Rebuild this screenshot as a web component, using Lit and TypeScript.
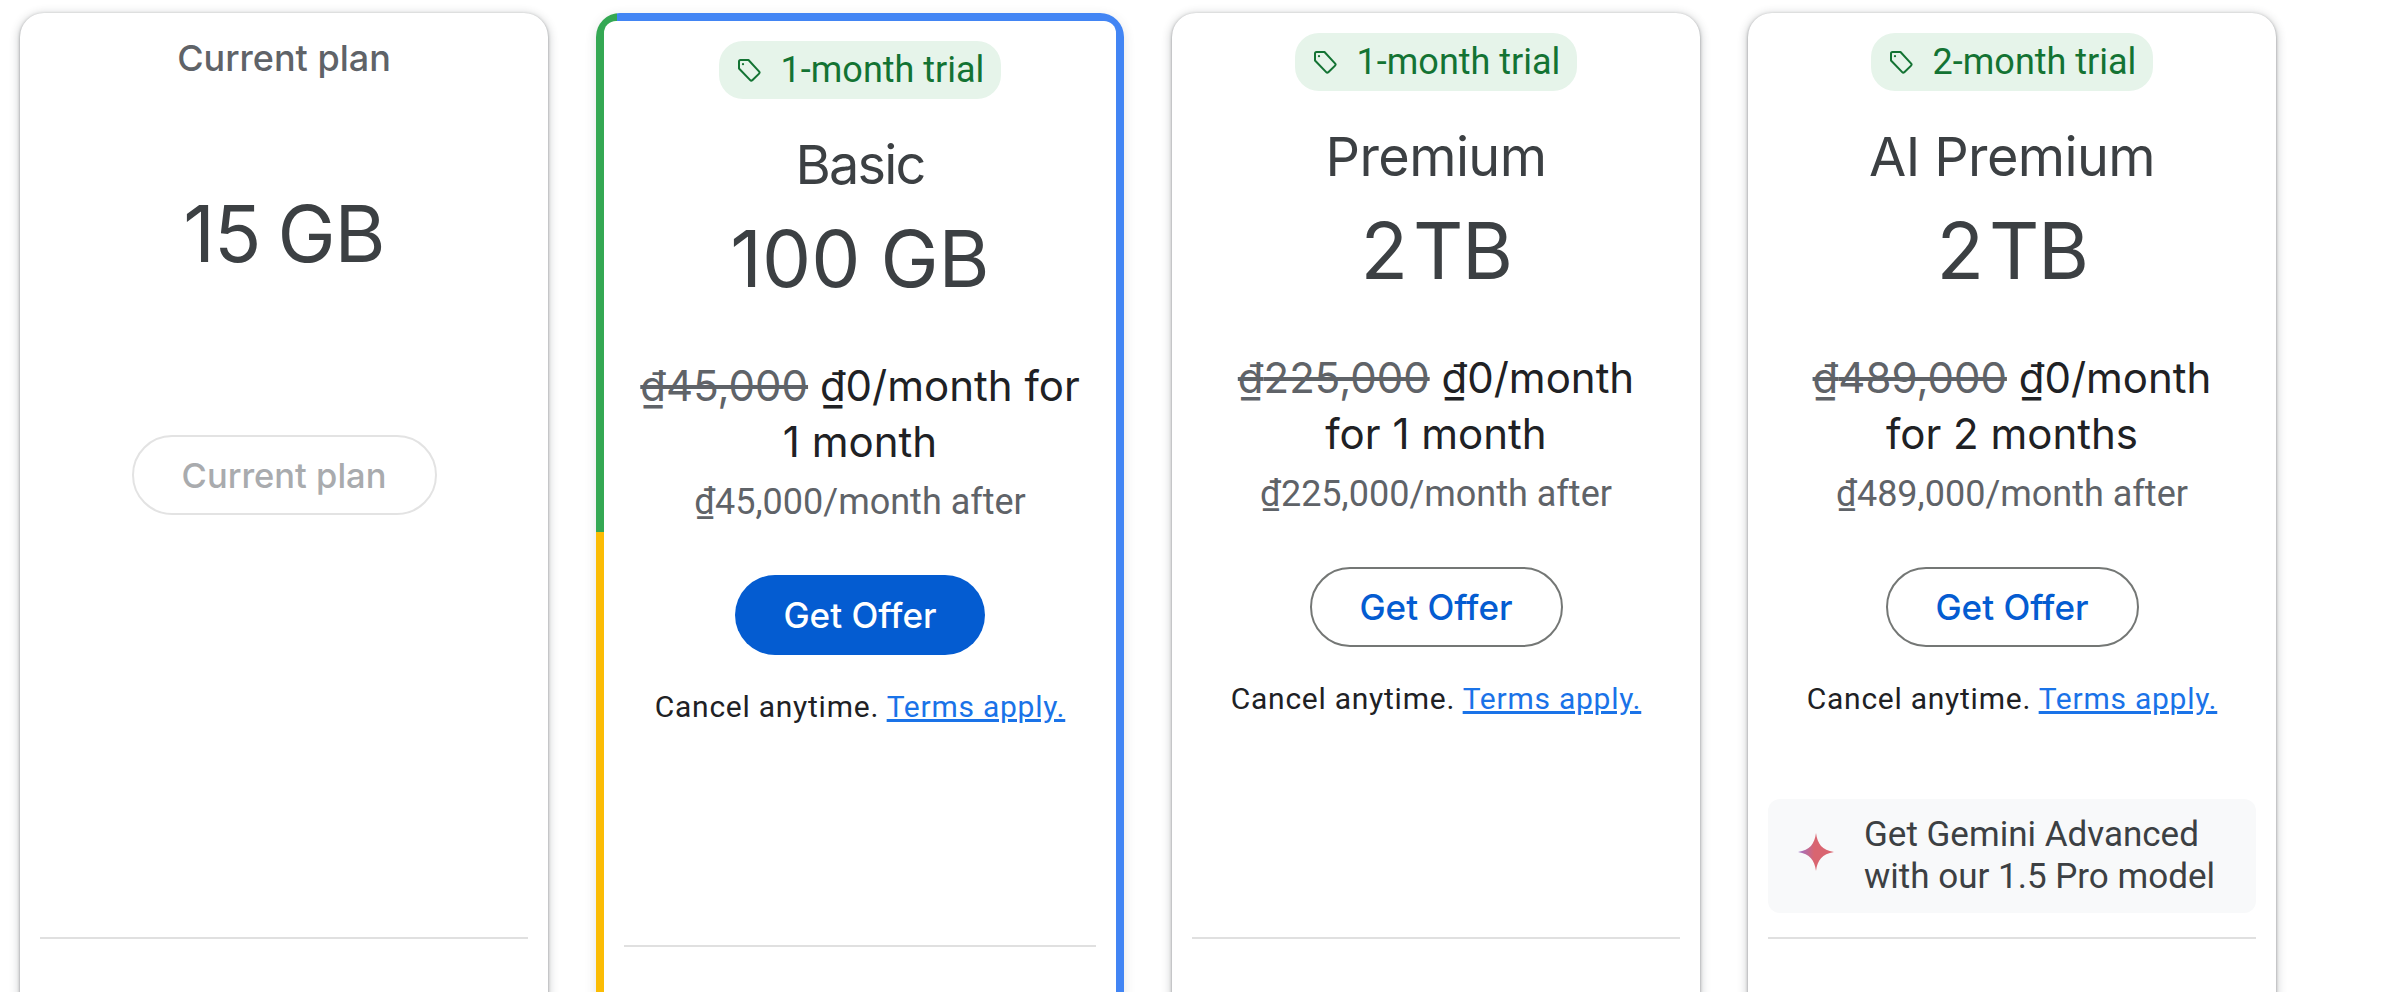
import { LitElement, html, css, nothing } from "lit";
import { customElement } from "lit/decorators.js";

const tag = html`<svg class="tag" viewBox="0 0 24 24" fill="none" stroke="currentColor" stroke-width="2" stroke-linejoin="round"><path d="M2 3.5A1.5 1.5 0 0 1 3.5 2H11.5L22.2 13.6A1.5 1.5 0 0 1 22.1 15.6L15.3 22.2A1.5 1.5 0 0 1 13.2 22.1L2 10.5Z"/><circle cx="6" cy="6.2" r="1.1" fill="currentColor" stroke="none"/></svg>`;

const plans = [
  { name: "Premium", trial: "1-month trial", size: "2 TB", was: "225,000", l1: "/month", l2: "for 1 month", after: "225,000" },
  { name: "AI Premium", trial: "2-month trial", size: "2 TB", was: "489,000", l1: "/month", l2: "for 2 months", after: "489,000", gem: true },
];

@customElement("app-root")
export class AppRoot extends LitElement {
  static styles = css`
    :host { display: block; width: 2390px; height: 992px; overflow: hidden; background: #fff; font-family: Roboto, sans-serif; }
    .row { display: flex; gap: 48px; padding: 13px 0 0 20px; align-items: flex-start; }
    .card { width: 528px; height: 1100px; box-sizing: border-box; border-radius: 24px; background: #fff; padding: 20px; flex: none;
      box-shadow: 0 1.5px 3px rgba(60,64,67,.5), 0 2px 9px 2px rgba(60,64,67,.22); }
    .ring { width: 528px; height: 1100px; box-sizing: border-box; padding: 8px; border-radius: 24px; flex: none;
      background:
        linear-gradient(#4285f4,#4285f4) right top / 507px 100% no-repeat,
        linear-gradient(#34a853,#34a853) left top / 21px 519px no-repeat,
        linear-gradient(#fbbc04,#fbbc04) left bottom / 21px calc(100% - 519px) no-repeat;
      box-shadow: 0 3px 12px rgba(60,64,67,.14); }
    .inner { height: 100%; box-sizing: border-box; background: #fff; border-radius: 12px; padding: 20px 20px 0; }
    .top { height: 904px; display: flex; flex-direction: column; align-items: center; text-align: center; }
    .rule { height: 2px; background: #e0e0e0; }
    .label { font: 500 36px/50px Inter, sans-serif; color: #5f6368; }
    .pill { display: flex; align-items: center; gap: 20px; height: 58px; box-sizing: border-box; padding: 0 17px 0 18px; border-radius: 24px; background: #e6f4ea; color: #137333; font-size: 36px; }
    .tag { width: 24px; height: 24px; }
    .name { font: 400 54px/72px Inter, sans-serif; letter-spacing: -.6px; color: #3c4043; margin-top: 30px; }
    .name.basic { letter-spacing: -1.8px; }
    .size { font: 400 78px/96px Inter, sans-serif; color: #3c4043; margin-top: 10px; letter-spacing: -1px; word-spacing: -4px; }
    .size.hundred { letter-spacing: 0; word-spacing: -2px; }
    .size.tb { letter-spacing: -1.5px; word-spacing: -14px; }
    .size.solo { margin-top: 103px; }
    .price { font: 400 42px/56px Inter, sans-serif; color: #202124; margin-top: 51px; }
    .price s { color: #5f6368; }
    .cur { text-decoration: underline; }
    .after { font-size: 36px; line-height: 50px; color: #5f6368; margin-top: 7px; }
    .btn { display: flex; align-items: center; justify-content: center; box-sizing: border-box; height: 80px; width: 250px; border-radius: 40px; font: 500 35px Inter, sans-serif; margin-top: 48px; }
    .fill { background: #045cd1; color: #fff; }
    .line { border: 2px solid #747775; color: #045cd1; width: 253px; }
    .off { border: 2px solid #e3e3e3; color: #a9abae; width: 305px; margin-top: 153px; font-size: 34.5px; }
    .cancel { font-size: 30px; line-height: 44px; color: #202124; margin-top: 30px; letter-spacing: .75px; }
    .cancel a { color: #1a73e8; text-decoration: underline; }
    .gem { align-self: stretch; margin-top: auto; height: 114px; box-sizing: border-box; border-radius: 12px; background: #f8f9fa; display: flex; align-items: center; gap: 30px; padding-left: 30px; text-align: left; font-size: 35px; line-height: 42px; color: #3c4043; margin-bottom: 24px; }
    .star { width: 36px; height: 38px; flex: none; margin-bottom: 8px; }
  `;

  render() {
    return html`<div class="row">
      <div class="card">
        <div class="top">
          <div class="label">Current plan</div>
          <div class="size solo">15 GB</div>
          <div class="btn off">Current plan</div>
        </div>
        <div class="rule"></div>
      </div>
      <div class="ring"><div class="inner">
        <div class="top">
          <div class="pill">${tag}<span>1-month trial</span></div>
          <div class="name basic">Basic</div>
          <div class="size hundred">100 GB</div>
          <div class="price"><s><span class="cur">₫</span>45,000</s> <span class="cur">₫</span>0/month for<br />1 month</div>
          <div class="after"><span class="cur">₫</span>45,000/month after</div>
          <div class="btn fill">Get Offer</div>
          <div class="cancel">Cancel anytime. <a>Terms apply.</a></div>
        </div>
        <div class="rule"></div>
      </div></div>
      ${plans.map((p) => html`<div class="card">
        <div class="top">
          <div class="pill">${tag}<span>${p.trial}</span></div>
          <div class="name">${p.name}</div>
          <div class="size tb">${p.size}</div>
          <div class="price"><s><span class="cur">₫</span>${p.was}</s> <span class="cur">₫</span>0${p.l1}<br />${p.l2}</div>
          <div class="after"><span class="cur">₫</span>${p.after}/month after</div>
          <div class="btn line">Get Offer</div>
          <div class="cancel">Cancel anytime. <a>Terms apply.</a></div>
          ${p.gem ? html`<div class="gem">
            <svg class="star" viewBox="0 0 36 38"><defs><linearGradient id="g" x1="0" x2="1"><stop offset="0" stop-color="#9b72cb"/><stop offset=".45" stop-color="#d96570"/></linearGradient></defs><path fill="url(#g)" d="M18 0C19.5 11 24 17 36 19C24 21 19.5 27 18 38C16.5 27 12 21 0 19C12 17 16.5 11 18 0Z"/></svg>
            <div>Get Gemini Advanced<br />with our 1.5 Pro model</div></div>` : nothing}
        </div>
        <div class="rule"></div>
      </div>`)}
    </div>`;
  }
}
